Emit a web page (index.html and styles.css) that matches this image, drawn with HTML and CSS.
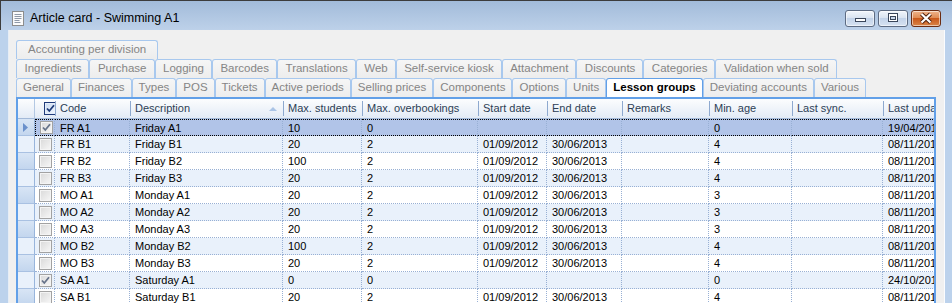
FILE: index.html
```html
<!DOCTYPE html>
<html lang="en">
<head>
  <meta charset="UTF-8">
  <meta name="viewport" content="width=device-width, initial-scale=1.0">
  <title>Article card - Swimming A1</title>
  <link rel="stylesheet" href="styles.css">
</head>
<body>
  <div class="window">
    <div class="titlebar">
      <svg class="app-icon" width="12" height="15" viewBox="0 0 12 15">
        <rect x="0.5" y="0.5" width="11" height="14" fill="#fbfbfb" stroke="#8d8d8d"/>
        <path d="M2.5 3.5h7M2.5 5.5h7M2.5 7.5h7M2.5 9.5h5M2.5 11.5h6" stroke="#8f99a8"/>
      </svg>
      <span class="title">Article card - Swimming A1</span>
      <div class="caption-buttons">
        <span class="cap-btn">
          <svg width="28" height="15" viewBox="0 0 28 15"><rect x="9.5" y="7.5" width="10" height="3" fill="#fff" stroke="#3a465a"/></svg>
        </span>
        <span class="cap-btn">
          <svg width="28" height="15" viewBox="0 0 28 15"><rect x="9.5" y="2.5" width="9" height="8" fill="#fff" stroke="#3a465a"/><rect x="11.5" y="5.5" width="5" height="3" fill="#c9d7ea" stroke="#3a465a"/></svg>
        </span>
        <span class="cap-btn close">
          <svg width="28" height="15" viewBox="0 0 28 15"><path d="M9.5 3l9 8.5M18.5 3l-9 8.5" stroke="#4b1e0c" stroke-width="4"/><path d="M9.5 3l9 8.5M18.5 3l-9 8.5" stroke="#fff" stroke-width="2.2"/></svg>
        </span>
      </div>
    </div>

    <div class="frame">
      <div class="content">
        <div class="tabs">
          <div class="tab-row third">
            <span class="tab">Accounting per division</span>
          </div>
          <div class="tab-row second">
            <span class="tab">Ingredients</span>
            <span class="tab">Purchase</span>
            <span class="tab">Logging</span>
            <span class="tab">Barcodes</span>
            <span class="tab">Translations</span>
            <span class="tab">Web</span>
            <span class="tab">Self-service kiosk</span>
            <span class="tab">Attachment</span>
            <span class="tab">Discounts</span>
            <span class="tab">Categories</span>
            <span class="tab">Validation when sold</span>
          </div>
          <div class="tab-row first">
            <span class="tab">General</span>
            <span class="tab">Finances</span>
            <span class="tab">Types</span>
            <span class="tab">POS</span>
            <span class="tab">Tickets</span>
            <span class="tab">Active periods</span>
            <span class="tab">Selling prices</span>
            <span class="tab">Components</span>
            <span class="tab">Options</span>
            <span class="tab">Units</span>
            <span class="tab active">Lesson groups</span>
            <span class="tab">Deviating accounts</span>
            <span class="tab">Various</span>
          </div>
        </div>

        <div class="grid-box">
          <table class="grid">
            <thead>
              <tr>
                <th class="rowhdr"></th>
                <th class="chk"><span class="cb head"><svg width="11" height="11" viewBox="0 0 11 11"><path d="M2 5.5l2.3 2.5L9 2.3" fill="none" stroke="#1d3a78" stroke-width="1.8"/></svg></span></th>
                <th class="c-code">Code</th>
                <th class="c-desc">Description<span class="sort"></span></th>
                <th class="c-maxst">Max. students</th>
                <th class="c-maxov">Max. overbookings</th>
                <th class="c-start">Start date</th>
                <th class="c-end">End date</th>
                <th class="c-rem">Remarks</th>
                <th class="c-age">Min. age</th>
                <th class="c-sync">Last sync.</th>
                <th class="c-upd">Last update</th>
              </tr>
            </thead>
            <tbody>
              <tr class="current">
                <td class="rowhdr"><svg class="marker" width="5" height="9" viewBox="0 0 5 9"><path d="M0 0l5 4.5L0 9z" fill="#6a90cb"/></svg></td>
                <td class="chk"><span class="cb"><svg width="11" height="11" viewBox="0 0 11 11"><path d="M2 5.5l2.3 2.5L9 2.3" fill="none" stroke="#66738a" stroke-width="1.8"/></svg></span></td>
                <td>FR A1</td><td>Friday A1</td><td>10</td><td>0</td><td></td><td></td><td></td><td>0</td><td></td><td>19/04/2013</td>
              </tr>
              <tr>
                <td class="rowhdr"></td><td class="chk"><span class="cb"></span></td>
                <td>FR B1</td><td>Friday B1</td><td>20</td><td>2</td><td>01/09/2012</td><td>30/06/2013</td><td></td><td>4</td><td></td><td>08/11/2012</td>
              </tr>
              <tr>
                <td class="rowhdr"></td><td class="chk"><span class="cb"></span></td>
                <td>FR B2</td><td>Friday B2</td><td>100</td><td>2</td><td>01/09/2012</td><td>30/06/2013</td><td></td><td>4</td><td></td><td>08/11/2012</td>
              </tr>
              <tr>
                <td class="rowhdr"></td><td class="chk"><span class="cb"></span></td>
                <td>FR B3</td><td>Friday B3</td><td>20</td><td>2</td><td>01/09/2012</td><td>30/06/2013</td><td></td><td>4</td><td></td><td>08/11/2012</td>
              </tr>
              <tr>
                <td class="rowhdr"></td><td class="chk"><span class="cb"></span></td>
                <td>MO A1</td><td>Monday A1</td><td>20</td><td>2</td><td>01/09/2012</td><td>30/06/2013</td><td></td><td>3</td><td></td><td>08/11/2012</td>
              </tr>
              <tr>
                <td class="rowhdr"></td><td class="chk"><span class="cb"></span></td>
                <td>MO A2</td><td>Monday A2</td><td>20</td><td>2</td><td>01/09/2012</td><td>30/06/2013</td><td></td><td>3</td><td></td><td>08/11/2012</td>
              </tr>
              <tr>
                <td class="rowhdr"></td><td class="chk"><span class="cb"></span></td>
                <td>MO A3</td><td>Monday A3</td><td>20</td><td>2</td><td>01/09/2012</td><td>30/06/2013</td><td></td><td>3</td><td></td><td>08/11/2012</td>
              </tr>
              <tr>
                <td class="rowhdr"></td><td class="chk"><span class="cb"></span></td>
                <td>MO B2</td><td>Monday B2</td><td>100</td><td>2</td><td>01/09/2012</td><td>30/06/2013</td><td></td><td>4</td><td></td><td>08/11/2012</td>
              </tr>
              <tr>
                <td class="rowhdr"></td><td class="chk"><span class="cb"></span></td>
                <td>MO B3</td><td>Monday B3</td><td>20</td><td>2</td><td>01/09/2012</td><td>30/06/2013</td><td></td><td>4</td><td></td><td>08/11/2012</td>
              </tr>
              <tr>
                <td class="rowhdr"></td>
                <td class="chk"><span class="cb"><svg width="11" height="11" viewBox="0 0 11 11"><path d="M2 5.5l2.3 2.5L9 2.3" fill="none" stroke="#66738a" stroke-width="1.8"/></svg></span></td>
                <td>SA A1</td><td>Saturday A1</td><td>0</td><td>0</td><td></td><td></td><td></td><td>0</td><td></td><td>24/10/2012</td>
              </tr>
              <tr>
                <td class="rowhdr"></td><td class="chk"><span class="cb"></span></td>
                <td>SA B1</td><td>Saturday B1</td><td>20</td><td>2</td><td>01/09/2012</td><td>30/06/2013</td><td></td><td>4</td><td></td><td>08/11/2012</td>
              </tr>
            </tbody>
          </table>
        </div>
      </div>
    </div>
  </div>
</body>
</html>
```

FILE: styles.css
```css
body {
  margin: 0;
  overflow: hidden;
  background: #fff;
  font-family: "Liberation Sans", Arial, sans-serif;
}
.window {
  width: 952px;
  height: 340px;
  display: flex;
  flex-direction: column;
  background: #bcd2ec;
}

/* title bar */
.titlebar {
  height: 30px;
  box-sizing: border-box;
  display: flex;
  align-items: flex-start;
  border-top: 1px solid #3c3c3c;
  border-left: 1px solid #3c3c3c;
  background: linear-gradient(#a2bbda, #bdd1e9);
}
.app-icon {
  margin: 10px 0 0 11px;
}
.title {
  margin: 10px 0 0 6px;
  font-size: 12.5px;
  line-height: 15px;
  color: #000;
}
.caption-buttons {
  display: flex;
  gap: 3px;
  margin: 9px 11px 0 auto;
}
.cap-btn {
  display: block;
  width: 30px;
  height: 17px;
  box-sizing: border-box;
  border: 1px solid #5d6b82;
  border-radius: 3px;
  background: linear-gradient(#f1f5fb 0%, #dae4f1 45%, #c3d3e9 50%, #d6e2f1 100%);
  box-shadow: inset 0 0 0 1px rgba(255, 255, 255, 0.55);
}
.cap-btn svg {
  display: block;
}
.cap-btn.close {
  border-color: #6b2c12;
  background: linear-gradient(#efb48c 0%, #e08c55 45%, #c9591c 50%, #d98447 100%);
}

/* window body */
.frame {
  flex: 1;
  display: flex;
  min-height: 0;
  padding: 0 7px 0 8px;
}
.content {
  flex: 1;
  min-width: 0;
  display: flex;
  flex-direction: column;
  padding: 10px 8px 0 7px;
  background: #f0f0f0;
  border-left: 1px solid #e6edf6;
  border-right: 1px solid #fbfcfe;
}

/* tabs */
.tab-row {
  display: flex;
  height: 19px;
}
.tab {
  box-sizing: border-box;
  height: 19px;
  padding: 0 6px;
  border: 1px solid #a8c8ee;
  border-bottom: none;
  border-radius: 3px 3px 0 0;
  background: linear-gradient(#f6f6f6, #ededed);
  color: #858585;
  font-size: 11.5px;
  line-height: 17px;
  white-space: nowrap;
}
.tab-row.second .tab {
  padding: 0 7px 0 7.5px;
}
.tab-row.third .tab {
  padding: 0 11px;
}
.tab.active {
  background: #fff;
  border-color: #62a0e8;
  color: #000;
  font-weight: bold;
}

/* grid */
.grid-box {
  flex: 1;
  min-width: 0;
  border: 2px solid #62a0e8;
  background: #fff;
  overflow: hidden;
}
.grid {
  border-collapse: separate;
  border-spacing: 0;
  table-layout: fixed;
  width: 985px;
  font-size: 11px;
}
.grid th,
.grid td {
  box-sizing: border-box;
  padding: 0 0 0 5px;
  white-space: nowrap;
  overflow: hidden;
  text-align: left;
  font-weight: normal;
}
.grid th {
  height: 20px;
  padding-top: 3px;
  vertical-align: top;
  border-bottom: 1px solid #a3b9d8;
  color: #2c3e55;
  background:
    linear-gradient(#8ea9cf, #8ea9cf) no-repeat 0 2px / 1px 15px,
    linear-gradient(#fcfdfe, #e3ebf6);
}
.grid th.rowhdr,
.grid th.chk {
  background: linear-gradient(#fcfdfe, #e3ebf6);
}
.grid th.rowhdr {
  width: 17px;
  border-right: 1px solid #b3c8e3;
}
.grid th.chk { width: 20px; }
.c-code { width: 75px; }
.c-desc { width: 153px; }
.c-maxst { width: 79px; }
.c-maxov { width: 116px; }
.c-start { width: 69px; }
.c-end { width: 75px; }
.c-rem { width: 87px; }
.c-age { width: 83px; }
.c-sync { width: 91px; }
.c-upd { width: 140px; }

.sort {
  float: right;
  margin: 5px 6px 0 0;
  width: 0;
  height: 0;
  border-left: 4px solid transparent;
  border-right: 4px solid transparent;
  border-bottom: 4px solid #aac4e6;
}

.grid td {
  height: 17px;
  color: #000;
  border-right: 1px dotted #98b0d4;
  border-bottom: 1px dotted #98b0d4;
}
.grid tbody tr:nth-child(even) td {
  background: #e9f1fb;
}
.grid tr.current td {
  background: #b1c4e8;
  border-top: 1px dotted #000;
  border-bottom-color: #000;
}
.grid tr.current td.chk {
  border-left: 1px dotted #000;
}
.grid tr td.rowhdr {
  padding: 0;
  border-top: none;
  border-right: 1px solid #98b5dc;
  border-bottom: 1px solid #a9c1e2;
  background: linear-gradient(#d8e5f5, #c3d6ee);
}
.grid td.chk {
  padding: 0 0 0 4px;
}
.marker {
  display: block;
  margin-left: 5px;
}

/* checkbox */
.cb {
  display: block;
  width: 13px;
  height: 13px;
  box-sizing: border-box;
  border: 1px solid #a2a2a2;
  background: linear-gradient(135deg, #d9d9d9, #f7f7f7);
  box-shadow: inset 0 0 0 1px #f4f4f4;
}
.cb svg {
  display: block;
}
.cb.head {
  margin-left: 4px;
  border-color: #1f3a7a;
  background: linear-gradient(135deg, #c9daf2, #f3f7fd);
  box-shadow: inset 0 0 0 1px #e4edf9;
}
```
